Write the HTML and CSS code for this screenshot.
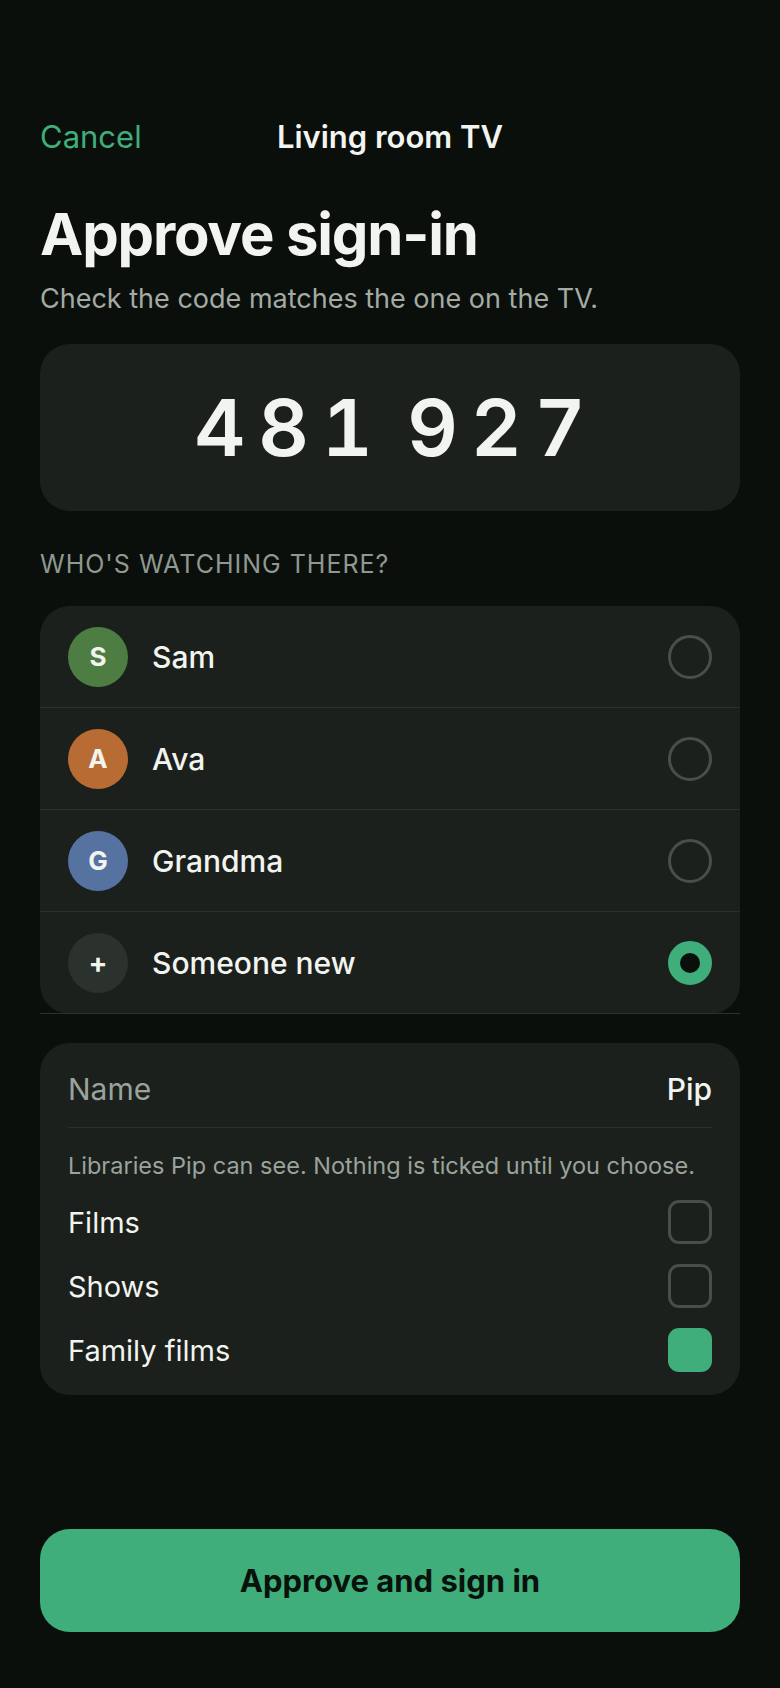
FILE: index.html
```html
<!DOCTYPE html>
<html lang="en">
<head>
  <meta charset="UTF-8">
  <meta name="viewport" content="width=device-width, initial-scale=1.0">
  <title>Approve sign-in</title>
  <link rel="stylesheet" href="styles.css">
</head>
<body>
  <div class="screen">
    <header class="top-bar">
      <a class="cancel" href="#">Cancel</a>
      <div class="device-name">Living room TV</div>
      <span></span>
    </header>

    <h1 class="title">Approve sign-in</h1>
    <p class="subtitle">Check the code matches the one on the TV.</p>

    <div class="code-card">
      <span class="code">481</span>
      <span class="code">927</span>
    </div>

    <div class="section-label">WHO'S WATCHING THERE?</div>

    <div class="card profile-list">
      <div class="profile-row">
        <div class="avatar avatar-green">S</div>
        <div class="profile-name">Sam</div>
        <div class="radio"></div>
      </div>
      <div class="profile-row">
        <div class="avatar avatar-orange">A</div>
        <div class="profile-name">Ava</div>
        <div class="radio"></div>
      </div>
      <div class="profile-row">
        <div class="avatar avatar-blue">G</div>
        <div class="profile-name">Grandma</div>
        <div class="radio"></div>
      </div>
      <div class="profile-row">
        <div class="avatar avatar-new">+</div>
        <div class="profile-name">Someone new</div>
        <div class="radio selected"></div>
      </div>
    </div>

    <div class="card new-profile">
      <div class="name-row">
        <span class="name-label">Name</span>
        <span class="name-value">Pip</span>
      </div>
      <p class="hint">Libraries Pip can see. Nothing is ticked until you choose.</p>
      <div class="libraries">
        <div class="library-row">
          <span>Films</span>
          <div class="checkbox"></div>
        </div>
        <div class="library-row">
          <span>Shows</span>
          <div class="checkbox"></div>
        </div>
        <div class="library-row">
          <span>Family films</span>
          <div class="checkbox checked"></div>
        </div>
      </div>
    </div>

    <div class="actions">
      <button class="approve-btn">Approve and sign in</button>
    </div>
  </div>
</body>
</html>
```

FILE: styles.css
```css
* {
  box-sizing: border-box;
}

body {
  margin: 0;
  background-color: #0a0f0c;
  color: #f2f4ef;
  font-family: Inter, "Noto Sans", sans-serif;
}

.screen {
  display: flex;
  flex-direction: column;
  min-height: 100vh;
  padding: 119px 40px 56px;
}

.top-bar {
  display: grid;
  grid-template-columns: 1fr auto 1fr;
  align-items: center;
  font-size: 31px;
  line-height: 36px;
}

.cancel {
  color: #3fae7a;
  text-decoration: none;
}

.device-name {
  font-weight: 600;
}

.title {
  margin: 49px 0 0;
  font-size: 58px;
  line-height: 61px;
  font-weight: 700;
  letter-spacing: -0.02em;
}

.subtitle {
  margin: 16px 0 0;
  font-size: 27px;
  line-height: 36px;
  color: #a3aba4;
}

.code-card {
  display: flex;
  justify-content: center;
  gap: 34px;
  margin-top: 27px;
  padding: 44px 0;
  background-color: #1b201c;
  border-radius: 30px;
}

.code {
  font-size: 79px;
  line-height: 79px;
  font-weight: 600;
  letter-spacing: 0.16em;
  margin-right: -0.16em;
  font-variant-numeric: tabular-nums;
}

.section-label {
  margin-top: 38px;
  font-size: 25px;
  line-height: 30px;
  letter-spacing: 0.04em;
  color: #8f9891;
}

.card {
  background-color: #1b201c;
  border-radius: 30px;
}

.profile-list {
  margin-top: 27px;
}

.profile-row {
  display: flex;
  align-items: center;
  gap: 24px;
  padding: 20.5px 28px;
  border-bottom: 1px solid #2a302b;
}

.avatar {
  flex: 0 0 auto;
  width: 60px;
  height: 60px;
  border-radius: 50%;
  display: flex;
  align-items: center;
  justify-content: center;
  font-size: 26px;
  font-weight: 700;
  color: #f2f4ef;
}

.avatar-green { background-color: #4e7d44; }
.avatar-orange { background-color: #b86c34; }
.avatar-blue { background-color: #5672a0; }
.avatar-new { background-color: #2b312c; font-size: 28px; }

.profile-name {
  flex: 1;
  font-size: 30px;
  line-height: 36px;
  font-weight: 500;
}

.radio {
  width: 44px;
  height: 44px;
  border-radius: 50%;
  border: 3px solid #474f49;
}

.radio.selected {
  border: 12px solid #3fae7a;
  background-color: #0a0f0c;
}

.new-profile {
  margin-top: 29px;
  padding: 0 28px 23px;
}

.name-row {
  display: flex;
  justify-content: space-between;
  padding: 28px 0 20px;
  font-size: 30px;
  line-height: 36px;
  border-bottom: 1px solid #2a302b;
}

.name-label {
  color: #9aa39c;
}

.name-value {
  font-weight: 500;
}

.hint {
  margin: 22px 0 0;
  font-size: 23.5px;
  line-height: 32px;
  color: #9aa39c;
}

.libraries {
  display: flex;
  flex-direction: column;
  gap: 20px;
  margin-top: 18px;
}

.library-row {
  display: flex;
  align-items: center;
  justify-content: space-between;
  height: 44px;
  font-size: 29px;
}

.checkbox {
  width: 44px;
  height: 44px;
  border-radius: 11px;
  border: 3px solid #474f49;
}

.checkbox.checked {
  background-color: #3fae7a;
  border-color: #3fae7a;
}

.actions {
  margin-top: auto;
}

.approve-btn {
  display: block;
  width: 100%;
  height: 103px;
  border: none;
  border-radius: 30px;
  background-color: #3fae7a;
  color: #08110c;
  font-family: inherit;
  font-size: 31px;
  font-weight: 700;
}
```
